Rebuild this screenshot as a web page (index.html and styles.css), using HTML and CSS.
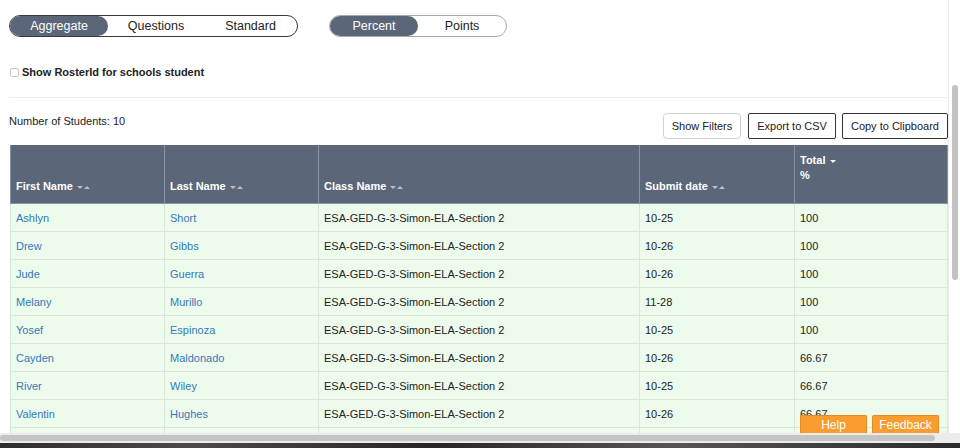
FILE: index.html
```html
<!DOCTYPE html>
<html lang="en">
<head>
    <meta charset="UTF-8">
    <title>Student Report</title>
    <link rel="stylesheet" href="styles.css">
</head>
<body>
    <div class="screen">
        <div class="viewport">
            <main class="page">
                <div class="toolbar">
                    <div class="segmented dark">
                        <span class="seg active w-agg">Aggregate</span>
                        <span class="seg w-q">Questions</span>
                        <span class="seg w-std">Standard</span>
                    </div>
                    <div class="segmented light">
                        <span class="seg active w-pct">Percent</span>
                        <span class="seg w-pts">Points</span>
                    </div>
                </div>

                <label class="roster"><span class="check"></span>Show RosterId for schools student</label>

                <hr class="divider">

                <div class="table-bar">
                    <span class="count">Number of Students: 10</span>
                    <div class="actions">
                        <button class="btn soft">Show Filters</button>
                        <button class="btn">Export to CSV</button>
                        <button class="btn">Copy to Clipboard</button>
                    </div>
                </div>

                <table class="grades">
                    <thead>
                        <tr>
                            <th class="c1">First Name <span class="sort"><i class="dn"></i><i class="up"></i></span></th>
                            <th class="c2">Last Name <span class="sort"><i class="dn"></i><i class="up"></i></span></th>
                            <th class="c3">Class Name <span class="sort"><i class="dn"></i><i class="up"></i></span></th>
                            <th class="c4">Submit date <span class="sort"><i class="dn"></i><i class="up"></i></span></th>
                            <th class="c5 top">Total <span class="sort on"><i class="dn"></i></span><br>%</th>
                        </tr>
                    </thead>
                    <tbody>
                        <tr><td><a href="#">Ashlyn</a></td><td><a href="#">Short</a></td><td>ESA-GED-G-3-Simon-ELA-Section 2</td><td>10-25</td><td>100</td></tr>
                        <tr><td><a href="#">Drew</a></td><td><a href="#">Gibbs</a></td><td>ESA-GED-G-3-Simon-ELA-Section 2</td><td>10-26</td><td>100</td></tr>
                        <tr><td><a href="#">Jude</a></td><td><a href="#">Guerra</a></td><td>ESA-GED-G-3-Simon-ELA-Section 2</td><td>10-26</td><td>100</td></tr>
                        <tr><td><a href="#">Melany</a></td><td><a href="#">Murillo</a></td><td>ESA-GED-G-3-Simon-ELA-Section 2</td><td>11-28</td><td>100</td></tr>
                        <tr><td><a href="#">Yosef</a></td><td><a href="#">Espinoza</a></td><td>ESA-GED-G-3-Simon-ELA-Section 2</td><td>10-25</td><td>100</td></tr>
                        <tr><td><a href="#">Cayden</a></td><td><a href="#">Maldonado</a></td><td>ESA-GED-G-3-Simon-ELA-Section 2</td><td>10-26</td><td>66.67</td></tr>
                        <tr><td><a href="#">River</a></td><td><a href="#">Wiley</a></td><td>ESA-GED-G-3-Simon-ELA-Section 2</td><td>10-25</td><td>66.67</td></tr>
                        <tr><td><a href="#">Valentin</a></td><td><a href="#">Hughes</a></td><td>ESA-GED-G-3-Simon-ELA-Section 2</td><td>10-26</td><td>66.67</td></tr>
                        <tr class="filler"><td></td><td></td><td></td><td></td><td></td></tr>
                    </tbody>
                </table>
            </main>
            <div class="vscroll"><div class="vthumb"></div></div>
        </div>
        <div class="hscroll"><div class="hthumb"></div></div>
        <div class="desk"></div>

        <div class="float-btns">
            <button class="orange help">Help</button>
            <button class="orange feedback">Feedback</button>
        </div>
    </div>
</body>
</html>
```

FILE: styles.css
```css
body {
    margin: 0;
    font-family: "Liberation Sans", Arial, sans-serif;
    color: #222;
    background: #fff;
}

.screen {
    position: relative;
    width: 960px;
    height: 448px;
    overflow: hidden;
    display: flex;
    flex-direction: column;
}

.viewport {
    height: 433px;
    display: flex;
    overflow: hidden;
}

.page {
    flex: 1;
    padding: 15px 0 0 9px;
}

/* segmented switches */
.toolbar {
    display: flex;
    gap: 31px;
}

.segmented {
    display: flex;
    height: 20px;
    border-radius: 11px;
    border: 1px solid #3a3a3a;
    font-size: 12.5px;
}

.segmented.light {
    border-color: #a9a9a9;
}

.seg {
    display: flex;
    align-items: center;
    justify-content: center;
    color: #222;
    border-radius: 11px;
}

.seg.active {
    background-color: #5b6678;
    color: #fff;
}

.w-agg { width: 98px; }
.w-q { width: 96px; }
.w-std { width: 93px; }
.w-pct { width: 88px; }
.w-pts { width: 88px; }

.roster {
    display: flex;
    align-items: center;
    margin-top: 29px;
    padding-left: 1px;
    font-size: 11px;
    font-weight: bold;
    color: #222;
}

.check {
    width: 7px;
    height: 7px;
    border: 1px solid #c8c8c8;
    border-radius: 2px;
    margin-right: 3px;
    background: #fff;
}

.divider {
    border: none;
    border-top: 1px solid #eee;
    margin: 19px 0 0 0;
}

.table-bar {
    display: flex;
    justify-content: space-between;
    align-items: flex-start;
    margin-top: 15px;
    margin-bottom: 6px;
}

.count {
    font-size: 11px;
    padding-top: 2px;
}

.actions {
    display: flex;
    gap: 6px;
}

.btn {
    height: 26px;
    padding: 0 8px;
    font-family: inherit;
    font-size: 11px;
    color: #222;
    background: #fff;
    border: 1px solid #333;
    border-radius: 2px;
}

.btn.soft {
    border-color: #d0d0d0;
    border-radius: 4px;
    margin-right: 1px;
}

/* table */
.grades {
    width: 938px;
    margin-left: 1px;
    border-collapse: collapse;
    font-size: 11px;
}

.grades th {
    height: 47px;
    background-color: #5b6678;
    color: #fff;
    text-align: left;
    vertical-align: bottom;
    padding: 0 5px 11px 5px;
    border: 1px solid #8a93a1;
    border-top: none;
    font-weight: bold;
}

.grades th.top {
    vertical-align: top;
    padding-top: 8px;
    padding-bottom: 0;
    line-height: 15px;
}

.c1 { width: 143px; }
.c2 { width: 143px; }
.c3 { width: 310px; }
.c4 { width: 144px; }

.sort {
    display: inline-flex;
    align-items: center;
    gap: 1px;
    margin-left: 1px;
    vertical-align: middle;
}

.sort i {
    width: 0;
    height: 0;
    border-left: 3px solid transparent;
    border-right: 3px solid transparent;
}

.sort .dn { border-top: 3px solid #b9c0ca; }
.sort .up { border-bottom: 3px solid #b9c0ca; }
.sort.on .dn { border-top-color: #fff; }

.grades td {
    height: 27px;
    padding: 0 5px;
    background-color: #edfbec;
    border: 1px solid #d9e6d8;
    color: #222;
}

.grades td a {
    color: #3479bb;
    text-decoration: none;
}

/* scrollbars */
.vscroll {
    width: 11px;
    border-left: 1px solid #eeeeee;
    position: relative;
    background: #fff;
}

.vthumb {
    position: absolute;
    left: 3px;
    top: 85px;
    width: 6px;
    height: 195px;
    border-radius: 3px;
    background: #c2c2c2;
}

.hscroll {
    height: 10px;
    background: #ececec;
    position: relative;
}

.hthumb {
    position: absolute;
    left: 0;
    top: 2px;
    width: 935px;
    height: 6px;
    border-radius: 3px;
    background: #c4c4c4;
}

.desk {
    flex: 1;
    background: linear-gradient(90deg, #2d2d2d, #4a4a4a 20%, #262626 45%, #555 70%, #2b2b2b);
}

/* floating help buttons */
.float-btns {
    position: absolute;
    left: 800px;
    top: 415px;
    display: flex;
    gap: 5px;
}

.orange {
    width: 67px;
    height: 18px;
    padding: 0;
    background-color: #f89d2e;
    border: 1px solid #e58a1c;
    border-bottom: none;
    border-radius: 2px 2px 0 0;
    color: #fff;
    font-family: inherit;
    font-size: 12px;
}
```
